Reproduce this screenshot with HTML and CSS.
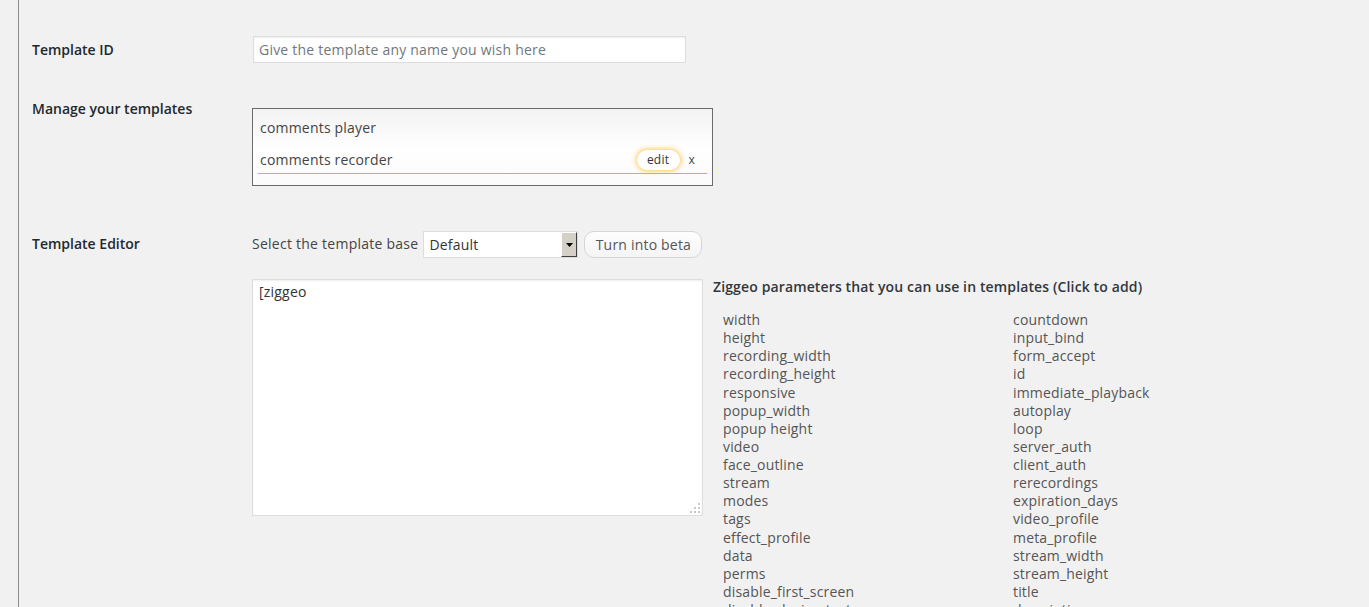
FILE: index.html
```html
<!DOCTYPE html>
<html lang="en">
<head>
<meta charset="utf-8">
<title>Ziggeo templates</title>
<link rel="stylesheet" href="styles.css">
</head>
<body>
<div class="wrap">
  <div class="row row-id">
    <div class="label">Template ID</div>
    <div class="field"><input class="text-input" type="text" placeholder="Give the template any name you wish here"></div>
  </div>

  <div class="row row-manage">
    <div class="label">Manage your templates</div>
    <div class="field">
      <div class="templates">
        <div class="tpl">comments player</div>
        <div class="tpl tpl-active"><span class="tpl-name">comments recorder</span><span class="edit">edit</span><span class="del">x</span></div>
      </div>
    </div>
  </div>

  <div class="row row-editor">
    <div class="label label-editor">Template Editor</div>
    <div class="field">
      <div class="toolbar">
        <span class="base-label">Select the template base</span>
        <div class="select-wrap">
          <select class="select"><option>Default</option></select>
          <span class="select-btn"><svg width="7" height="4" viewBox="0 0 7 4"><path d="M0 0h7L3.5 4z" fill="#000"/></svg></span>
        </div>
        <button class="beta-btn" type="button">Turn into beta</button>
      </div>
      <div class="editor">
        <div class="ta-wrap">
          <textarea class="ta">[ziggeo</textarea>
          <svg class="grip" width="10" height="10" viewBox="0 0 10 10"><g fill="#c8c8c8"><rect x="8" y="0" width="2" height="2"/><rect x="4" y="4" width="2" height="2"/><rect x="8" y="4" width="2" height="2"/><rect x="0" y="8" width="2" height="2"/><rect x="4" y="8" width="2" height="2"/><rect x="8" y="8" width="2" height="2"/></g></svg>
        </div>
        <div class="params">
          <div class="params-title">Ziggeo parameters that you can use in templates (Click to add)</div>
          <div class="param-list">
            <span>width</span><span>height</span><span>recording_width</span><span>recording_height</span><span>responsive</span><span>popup_width</span><span>popup height</span><span>video</span><span>face_outline</span><span>stream</span><span>modes</span><span>tags</span><span>effect_profile</span><span>data</span><span>perms</span><span>disable_first_screen</span><span>disable_device_test</span>
            <span>countdown</span><span>input_bind</span><span>form_accept</span><span>id</span><span>immediate_playback</span><span>autoplay</span><span>loop</span><span>server_auth</span><span>client_auth</span><span>rerecordings</span><span>expiration_days</span><span>video_profile</span><span>meta_profile</span><span>stream_width</span><span>stream_height</span><span>title</span><span>description</span>
          </div>
        </div>
      </div>
    </div>
  </div>
</div>
</body>
</html>
```
FILE: styles.css
```css
html, body {
  margin: 0;
  padding: 0;
  height: 607px;
  overflow: hidden;
  background: #f1f1f1;
}
body {
  font-family: "Open Sans", "Liberation Sans", sans-serif;
  font-size: 14px;
  line-height: 1.3;
  color: #444;
  letter-spacing: 0.2px;
}
.wrap {
  margin-left: 18px;
  border-left: 1px solid #8c8c8c;
  min-height: 700px;
  padding: 36px 0 0 13px;
}
.row {
  display: grid;
  grid-template-columns: 220px 1fr;
}
.label {
  font-weight: 600;
  font-size: 14px;
  line-height: 18px;
  color: #23282d;
  letter-spacing: 0;
}
.row-id { align-items: center; }
.row-manage { margin-top: 37px; }
.row-editor { margin-top: 45px; }
.label-editor { padding-top: 4px; }

.text-input {
  box-sizing: border-box;
  width: 433px;
  height: 27px;
  margin: 0 0 0 1px;
  display: block;
  border: 1px solid #ddd;
  background: #fff;
  padding: 0 5px;
  font-family: inherit;
  font-size: 14px;
  letter-spacing: 0.22px;
  color: #333;
  box-shadow: inset 0 1px 2px rgba(0,0,0,0.07);
  outline: none;
}
.text-input::placeholder { color: #72777c; }

.templates {
  margin-top: 8px;
  box-sizing: border-box;
  width: 461px;
  height: 78px;
  border: 1px solid #6b6b6b;
  background: linear-gradient(to bottom, #f3f3f3 0%, #ffffff 55%, #fbfbfb 100%);
  padding: 6px 5px 0 5px;
}
.tpl {
  height: 26px;
  display: flex;
  align-items: center;
  padding-left: 2px;
  color: #444;
  margin-bottom: 6px;
}
.tpl-active {
  border-bottom: 1px solid #f0a92e;
  margin-bottom: 0;
}
.tpl-name { flex: 1; }
.edit {
  box-sizing: border-box;
  width: 43px;
  height: 20px;
  border-radius: 10px;
  background: #fff;
  font-size: 12px;
  line-height: 20px;
  text-align: center;
  color: #333;
  letter-spacing: 0.2px;
  box-shadow: 0 0 5px 1px rgba(255, 185, 40, 0.8);
}
.del {
  font-size: 12px;
  color: #444;
  margin: 0 12px 0 9px;
}

.toolbar {
  display: flex;
  align-items: center;
  height: 27px;
}
.base-label { color: #444; margin-right: 5px; letter-spacing: 0.25px; }
.select-wrap {
  box-sizing: border-box;
  display: flex;
  width: 155px;
  height: 27px;
  border: 1px solid #ddd;
  background: #fff;
}
.select {
  flex: 1;
  appearance: none;
  -webkit-appearance: none;
  border: 0;
  background: transparent;
  font-family: inherit;
  font-size: 14px;
  letter-spacing: 0.2px;
  color: #333;
  padding: 0 5px;
  outline: none;
}
.select-btn {
  box-sizing: border-box;
  width: 16px;
  background: #d4d0c8;
  border-left: 1px solid #fff;
  border-top: 1px solid #fff;
  border-right: 1px solid #404040;
  border-bottom: 1px solid #404040;
  display: flex;
  align-items: center;
  justify-content: center;
}
.beta-btn {
  box-sizing: border-box;
  margin-left: 6px;
  width: 118px;
  height: 27px;
  border: 1px solid #d6d6d6;
  border-radius: 10px;
  background: linear-gradient(to bottom, #fefefe, #f4f4f4);
  font-family: inherit;
  font-size: 14px;
  letter-spacing: 0.2px;
  color: #555;
  padding: 0;
}

.editor {
  display: flex;
  margin-top: 21px;
  gap: 10px;
}
.ta-wrap {
  position: relative;
  width: 451px;
  height: 237px;
  flex: none;
}
.ta {
  box-sizing: border-box;
  width: 451px;
  height: 237px;
  display: block;
  border: 1px solid #ddd;
  background: #fff;
  resize: none;
  font-family: inherit;
  font-size: 14px;
  letter-spacing: 0.2px;
  line-height: 18px;
  color: #333;
  padding: 3px 6px;
  margin: 0;
  box-shadow: inset 0 1px 2px rgba(0,0,0,0.07);
  outline: none;
}
.grip {
  position: absolute;
  right: 3px;
  bottom: 3px;
}
.params-title {
  font-weight: 600;
  color: #32373c;
  line-height: 16px;
  letter-spacing: 0.13px;
}
.param-list {
  margin-top: 16px;
  padding-left: 10px;
  display: grid;
  grid-template-columns: 290px 290px;
  grid-template-rows: repeat(17, 18.13px);
  grid-auto-flow: column;
  color: #555;
  letter-spacing: 0.17px;
}
.param-list span { cursor: pointer; white-space: nowrap; }
```
